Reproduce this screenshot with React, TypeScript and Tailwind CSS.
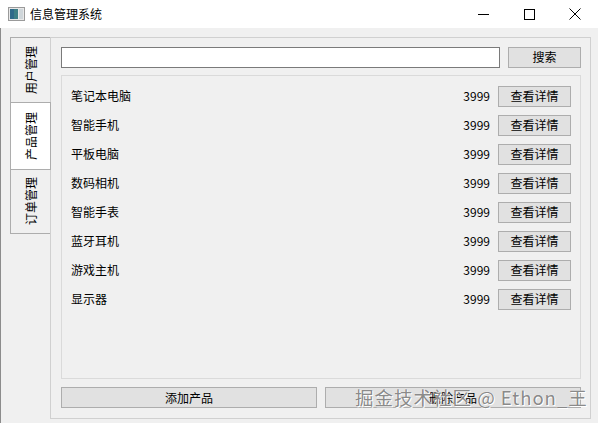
import React from "react";

const font = { fontFamily: '"Noto Sans CJK SC", "Noto Sans", sans-serif' };

const products = ["笔记本电脑", "智能手机", "平板电脑", "数码相机", "智能手表", "蓝牙耳机", "游戏主机", "显示器"];

function Tab({ label, active, h }: { label: string; active?: boolean; h: string }) {
  return (
    <div
      className={`flex items-center justify-center border border-[#adadad] ${h} ${active ? "bg-white -my-px z-10 relative" : "bg-[#f0f0f0]"}`}
    >
      <span className="[writing-mode:vertical-rl] [text-orientation:sideways] rotate-180 text-[12px] leading-none text-black">{label}</span>
    </div>
  );
}

export default function App() {
  return (
    <div className="relative w-[598px] h-[423px] bg-[#f0f0f0] overflow-hidden text-black" style={font}>
      {/* title bar */}
      <div className="h-[28px] bg-white flex items-center">
        <svg width="17" height="14" viewBox="0 0 17 14" className="ml-[8px]">
          <rect x="0.5" y="0.5" width="16" height="13" fill="#e8e8e8" stroke="#9a9a9a" />
          <rect x="2" y="2" width="8" height="10" fill="#3d7f86" />
          <rect x="2" y="2" width="4" height="10" fill="#2f6a8a" />
          <rect x="11" y="2" width="4" height="10" fill="#cfd6da" />
        </svg>
        <span className="ml-[5px] text-[12px] leading-none">信息管理系统</span>
        <div className="ml-auto flex items-center h-full">
          <div className="w-[46px] h-full flex items-center justify-center">
            <div className="w-[11px] h-px bg-black" />
          </div>
          <div className="w-[46px] h-full flex items-center justify-center">
            <div className="w-[11px] h-[11px] border border-black" />
          </div>
          <div className="w-[46px] h-full flex items-center justify-center">
            <svg width="12" height="12" viewBox="0 0 12 12">
              <path d="M0.5 0.5 L11.5 11.5 M11.5 0.5 L0.5 11.5" stroke="#000" strokeWidth="1" />
            </svg>
          </div>
        </div>
      </div>

      {/* body */}
      <div className="flex h-[395px] border-l border-[#8c8c8c] pl-[9px] pt-[9px]">
        <div className="flex flex-col w-[41px]">
          <Tab label="用户管理" h="h-[66px]" />
          <Tab label="产品管理" active h="h-[68px]" />
          <Tab label="订单管理" h="h-[65px]" />
        </div>
        <div className="-ml-px w-[541px] h-[382px] border border-[#d0d0d0] flex flex-col pl-[10px] pr-[9px] pt-[9px] pb-[10px]">
          <div className="flex gap-[8px] h-[21px]">
            <div className="flex-1 bg-white border border-[#7a7a7a]" />
            <button className="w-[73px] bg-[#e1e1e1] border border-[#adadad] text-[12px] leading-none">搜索</button>
          </div>
          <div className="mt-[7px] h-[305px] border border-[#dadada] flex flex-col gap-[8px] pt-[10px] pl-[9px] pr-[9px]">
            {products.map((p) => (
              <div key={p} className="flex items-center h-[21px]">
                <span className="text-[12px] leading-none">{p}</span>
                <span className="ml-auto text-[12px] leading-none mr-[8px]">3999</span>
                <button className="w-[73px] h-[21px] bg-[#e1e1e1] border border-[#adadad] text-[12px] leading-none">查看详情</button>
              </div>
            ))}
          </div>
          <div className="mt-[8px] flex gap-[8px] h-[21px]">
            <button className="flex-1 bg-[#e1e1e1] border border-[#adadad] text-[12px] leading-none">添加产品</button>
            <button className="flex-1 bg-[#e1e1e1] border border-[#adadad] text-[12px] leading-none">删除产品</button>
          </div>
        </div>
      </div>

      {/* watermark */}
      <div
        className="absolute left-[355px] top-[388px] text-[18.5px] tracking-[1px] leading-none text-[#7a7a7a]/90 whitespace-nowrap"
        style={{ textShadow: "0 0 1px #fff, 1px 1px 0 #fff" }}
      >
        掘金技术社区 @ Ethon_王
      </div>
    </div>
  );
}
